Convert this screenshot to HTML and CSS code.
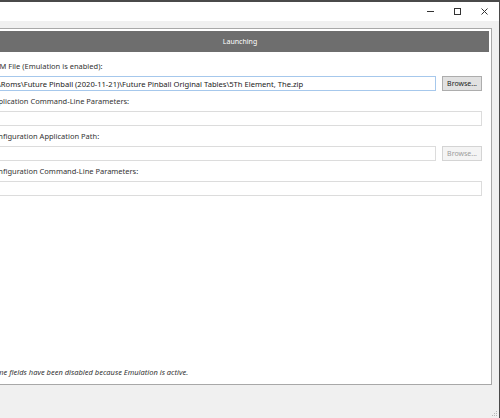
FILE: index.html
```html
<!DOCTYPE html>
<html lang="en">
<head>
    <meta charset="UTF-8">
    <title>Launching</title>
    <link rel="stylesheet" href="styles.css">
</head>
<body>
    <div class="window">
        <!-- title bar with window controls -->
        <div class="titlebar">
            <span class="ctrl ctrl-min"></span>
            <span class="ctrl ctrl-max"></span>
            <span class="ctrl ctrl-close">
                <svg width="7" height="7" viewBox="0 0 7 7"><path d="M0.5 0.5 L6.5 6.5 M6.5 0.5 L0.5 6.5" stroke="#333" stroke-width="1"/></svg>
            </span>
        </div>

        <div class="client">
            <div class="panel">
                <div class="panel-header">Launching</div>

                <div class="panel-body">
                    <div class="field">
                        <div class="field-label">ROM File (Emulation is enabled):</div>
                        <div class="field-row">
                            <input type="text" class="input-field focused" value="\Roms\Future Pinball (2020-11-21)\Future Pinball Original Tables\5Th Element, The.zip">
                            <button type="button" class="browse-btn">Browse...</button>
                        </div>
                    </div>

                    <div class="field">
                        <div class="field-label">Application Command-Line Parameters:</div>
                        <div class="field-row">
                            <input type="text" class="input-field" disabled>
                        </div>
                    </div>

                    <div class="field">
                        <div class="field-label">Configuration Application Path:</div>
                        <div class="field-row">
                            <input type="text" class="input-field" disabled>
                            <button type="button" class="browse-btn" disabled>Browse...</button>
                        </div>
                    </div>

                    <div class="field">
                        <div class="field-label">Configuration Command-Line Parameters:</div>
                        <div class="field-row">
                            <input type="text" class="input-field" disabled>
                        </div>
                    </div>

                    <div class="spacer"></div>

                    <div class="note">Some fields have been disabled because Emulation is active.</div>
                </div>
            </div>

            <!-- resize grip -->
            <div class="grip">
                <svg width="6" height="6" viewBox="0 0 6 6">
                    <rect x="4" y="0" width="1" height="1" fill="#b8b8b8"/>
                    <rect x="2" y="2" width="1" height="1" fill="#b8b8b8"/>
                    <rect x="4" y="2" width="1" height="1" fill="#b8b8b8"/>
                    <rect x="0" y="4" width="1" height="1" fill="#b8b8b8"/>
                    <rect x="2" y="4" width="1" height="1" fill="#b8b8b8"/>
                    <rect x="4" y="4" width="1" height="1" fill="#b8b8b8"/>
                </svg>
            </div>
        </div>
    </div>
</body>
</html>
```

FILE: styles.css
```css
* {
    margin: 0;
    padding: 0;
    box-sizing: border-box;
}

body {
    font-family: 'Noto Sans', 'Open Sans', sans-serif;
    background: #4a4a4a;
    width: 500px;
    height: 418px;
    overflow: hidden;
    padding-top: 2px; /* desktop strip above the window */
}

.window {
    width: 499px;
    height: 416px;
    background: #f0f0f0;
    display: flex;
    flex-direction: column;
}

.titlebar {
    height: 19px;
    background: #ffffff;
    display: flex;
    align-items: center;
    justify-content: flex-end;
    padding-right: 11px;
    gap: 20px;
}

.ctrl {
    width: 7px;
    height: 7px;
    display: block;
    position: relative;
}

.ctrl-min::after {
    content: "";
    position: absolute;
    left: 0;
    top: 3px;
    width: 7px;
    height: 1px;
    background: #333;
}

.ctrl-max {
    border: 1px solid #333;
}

.ctrl-close svg {
    display: block;
}

.client {
    flex: 1;
    padding: 7px 7px 0 0;
    display: flex;
    flex-direction: column;
    position: relative;
}

.panel {
    margin-left: -26px;
    height: 357px;
    background: #ffffff;
    border: 1px solid #a8a8a8;
    padding: 2px 2px 0 2px;
    display: flex;
    flex-direction: column;
}

.panel-header {
    height: 21px;
    background: #6e6e6e;
    color: #ffffff;
    font-size: 7px;
    display: flex;
    align-items: center;
    justify-content: center;
    padding-left: 14px;
}

.panel-body {
    flex: 1;
    display: flex;
    flex-direction: column;
    padding: 8px 7px 6px 12px;
}

.field {
    margin-bottom: 4px;
}

.field-label {
    font-size: 7.5px;
    line-height: 12px;
    height: 12px;
    color: #333;
    margin-bottom: 4px;
}

.field-row {
    display: flex;
    gap: 6px;
}

.input-field {
    flex: 1;
    height: 15px;
    border: 1px solid #dcdcdc;
    background: #ffffff;
    font-family: 'Noto Sans', 'Open Sans', sans-serif;
    font-size: 7.6px;
    color: #222;
    padding: 0 2px;
    outline: none;
}

.input-field.focused {
    border-color: #a6c8ec;
    padding-left: 8px;
}

.browse-btn {
    width: 40px;
    height: 15px;
    background: #e1e1e1;
    border: 1px solid #adadad;
    font-family: 'Noto Sans', 'Open Sans', sans-serif;
    font-size: 7px;
    color: #222;
}

.browse-btn:disabled {
    background: #f4f4f4;
    border-color: #d4d4d4;
    color: #9c9c9c;
}

.spacer {
    flex: 1;
}

.note {
    font-size: 7.5px;
    font-style: italic;
    color: #333;
    line-height: 12px;
}

.grip {
    position: absolute;
    right: 1px;
    bottom: 1px;
}

.grip svg {
    display: block;
}
```
